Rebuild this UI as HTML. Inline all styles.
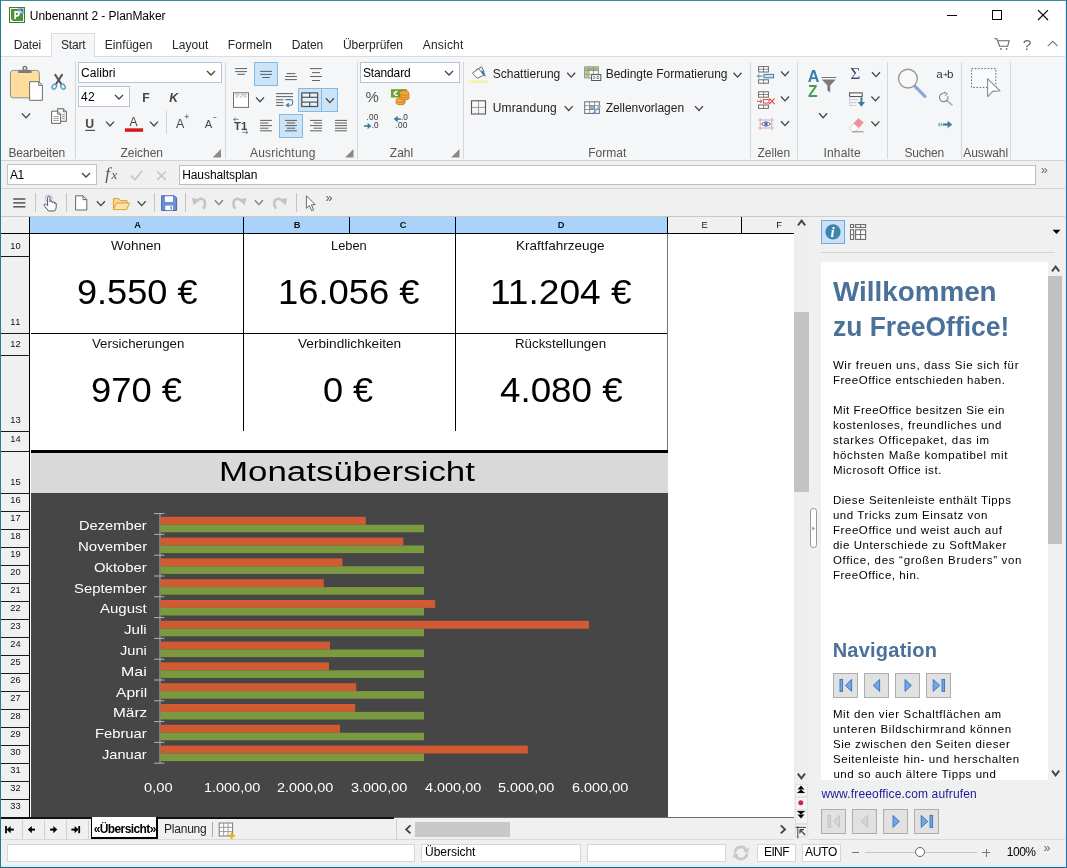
<!DOCTYPE html>
<html><head><meta charset="utf-8"><title>PlanMaker</title>
<style>
*{box-sizing:border-box;margin:0;padding:0}
html,body{will-change:transform;width:1067px;height:868px;overflow:hidden;background:#fff}
body{will-change:transform;font-family:"Liberation Sans",sans-serif;font-size:12px;color:#1e1e1e;position:relative}
.a{position:absolute}
.t{position:absolute;white-space:nowrap;line-height:1}
svg{position:absolute;overflow:visible}
</style></head><body>
<div class="a" style="left:1px;top:56px;width:1065px;height:105px;background:#f5f6f7;border-top:1px solid #dadbdc;border-bottom:1px solid #d2d3d5"></div>
<div class="a" style="left:51px;top:33px;width:44px;height:24px;background:#f5f6f7;border:1px solid #dadbdc;border-bottom:none"></div>
<div class="a" style="left:1px;top:161px;width:1065px;height:28px;background:#f0f0f0;border-bottom:1px solid #d4d4d4"></div>
<div class="a" style="left:1px;top:189px;width:1065px;height:28px;background:#f0f0f0"></div>
<div class="a" style="left:1px;top:216px;width:1065px;height:1px;background:#c8c8c8"></div>
<div class="a" style="left:30px;top:234px;width:765px;height:583px;background:#fff"></div>
<div class="a" style="left:808px;top:217px;width:258px;height:622px;background:#f0f0f0"></div>
<div class="a" style="left:1px;top:818px;width:807px;height:22px;background:#f0f0f0"></div>
<div class="a" style="left:1px;top:839px;width:1065px;height:28px;background:#f0f0f0;border-top:1px solid #d9d9d9"></div>
<div class="t" style="left:29.86px;top:10.14px;font-size:12px;letter-spacing:-0.047px;color:#000">Unbenannt 2 - PlanMaker</div>
<div class="t" style="left:13.86px;top:39.24px;font-size:12px;letter-spacing:-0.167px;color:#262626">Datei</div>
<div class="t" style="left:60.96px;top:39.24px;font-size:12px;letter-spacing:-0.193px;color:#262626">Start</div>
<div class="t" style="left:104.76px;top:39.24px;font-size:12px;letter-spacing:0.051px;color:#262626">Einfügen</div>
<div class="t" style="left:172.06px;top:39.24px;font-size:12px;letter-spacing:0.075px;color:#262626">Layout</div>
<div class="t" style="left:227.86px;top:39.24px;font-size:12px;letter-spacing:0.009px;color:#262626">Formeln</div>
<div class="t" style="left:291.86px;top:39.24px;font-size:12px;letter-spacing:-0.170px;color:#262626">Daten</div>
<div class="t" style="left:342.96px;top:39.24px;font-size:12px;color:#262626">Überprüfen</div>
<div class="t" style="left:422.76px;top:39.24px;font-size:12px;letter-spacing:0.203px;color:#262626">Ansicht</div>
<div class="t" style="left:8.46px;top:146.84px;font-size:12px;letter-spacing:-0.147px;color:#555">Bearbeiten</div>
<div class="t" style="left:120.46px;top:146.84px;font-size:12px;letter-spacing:-0.018px;color:#555">Zeichen</div>
<div class="t" style="left:249.96px;top:146.84px;font-size:12px;letter-spacing:0.200px;color:#555">Ausrichtung</div>
<div class="t" style="left:389.76px;top:146.84px;font-size:12px;letter-spacing:0.059px;color:#555">Zahl</div>
<div class="t" style="left:588.26px;top:146.84px;font-size:12px;letter-spacing:0.027px;color:#555">Format</div>
<div class="t" style="left:757.46px;top:146.84px;font-size:12px;letter-spacing:0.015px;color:#555">Zellen</div>
<div class="t" style="left:823.46px;top:146.84px;font-size:12px;letter-spacing:0.193px;color:#555">Inhalte</div>
<div class="t" style="left:904.46px;top:146.84px;font-size:12px;letter-spacing:-0.171px;color:#555">Suchen</div>
<div class="t" style="left:963.26px;top:146.84px;font-size:12px;letter-spacing:-0.083px;color:#555">Auswahl</div>
<div class="a" style="left:75px;top:62px;width:1px;height:97px;background:#d6d7d9"></div>
<div class="a" style="left:225px;top:62px;width:1px;height:97px;background:#d6d7d9"></div>
<div class="a" style="left:357px;top:62px;width:1px;height:97px;background:#d6d7d9"></div>
<div class="a" style="left:463px;top:62px;width:1px;height:97px;background:#d6d7d9"></div>
<div class="a" style="left:750px;top:62px;width:1px;height:97px;background:#d6d7d9"></div>
<div class="a" style="left:797px;top:62px;width:1px;height:97px;background:#d6d7d9"></div>
<div class="a" style="left:887px;top:62px;width:1px;height:97px;background:#d6d7d9"></div>
<div class="a" style="left:961px;top:62px;width:1px;height:97px;background:#d6d7d9"></div>
<div class="a" style="left:1010px;top:62px;width:1px;height:97px;background:#d6d7d9"></div>
<div class="t" style="left:492.66px;top:68.14px;font-size:12px;letter-spacing:0.024px;color:#222">Schattierung</div>
<div class="t" style="left:605.66px;top:68.14px;font-size:12px;letter-spacing:-0.009px;color:#222">Bedingte Formatierung</div>
<div class="t" style="left:492.66px;top:101.84px;font-size:12px;letter-spacing:0.175px;color:#222">Umrandung</div>
<div class="t" style="left:605.66px;top:101.84px;font-size:12px;letter-spacing:-0.024px;color:#222">Zellenvorlagen</div>
<div class="a" style="left:78px;top:62px;width:144px;height:21px;background:#fff;border:1px solid #b4c4d6"></div>
<div class="t" style="left:80.96px;top:66.64px;font-size:12px;letter-spacing:0.081px;color:#000">Calibri</div>
<svg style="left:206px;top:69.5px" width="10" height="6" viewBox="0 0 10 6"><path d="M1 1 L5 5 L9 1" fill="none" stroke="#444" stroke-width="1.3"/></svg>
<div class="a" style="left:78px;top:86px;width:52px;height:21px;background:#fff;border:1px solid #b4c4d6"></div>
<div class="t" style="left:80.96px;top:90.64px;font-size:12px;letter-spacing:0.360px;color:#000">42</div>
<svg style="left:114px;top:93.5px" width="10" height="6" viewBox="0 0 10 6"><path d="M1 1 L5 5 L9 1" fill="none" stroke="#444" stroke-width="1.3"/></svg>
<div class="a" style="left:360px;top:62px;width:100px;height:21px;background:#fff;border:1px solid #b4c4d6"></div>
<div class="t" style="left:362.96px;top:66.64px;font-size:12px;letter-spacing:-0.140px;color:#000">Standard</div>
<svg style="left:444px;top:69.5px" width="10" height="6" viewBox="0 0 10 6"><path d="M1 1 L5 5 L9 1" fill="none" stroke="#444" stroke-width="1.3"/></svg>
<div class="a" style="left:7px;top:164px;width:90px;height:21px;background:#fff;border:1px solid #b4c4d6"></div>
<div class="t" style="left:9.96px;top:168.64px;font-size:12px;letter-spacing:-0.554px;color:#000">A1</div>
<svg style="left:81px;top:171.5px" width="10" height="6" viewBox="0 0 10 6"><path d="M1 1 L5 5 L9 1" fill="none" stroke="#444" stroke-width="1.3"/></svg>
<div class="a" style="left:179px;top:165px;width:857px;height:20px;background:#fff;border:1px solid #b3bfcc"></div>
<div class="t" style="left:182.16px;top:169.44px;font-size:12px;letter-spacing:-0.068px;color:#000">Haushaltsplan</div>
<div class="a" style="left:1px;top:217px;width:29px;height:17px;background:#f0f0f0"></div>
<div class="a" style="left:30px;top:217px;width:637px;height:16px;background:#a9d3fa"></div>
<div class="a" style="left:667px;top:217px;width:128px;height:16px;background:#f0f0f0"></div>
<div class="a" style="left:29px;top:217px;width:1px;height:600px;background:#000"></div>
<div class="a" style="left:1px;top:233px;width:793px;height:1px;background:#000"></div>
<div class="a" style="left:243px;top:217px;width:1px;height:16px;background:#000"></div>
<div class="a" style="left:349px;top:217px;width:1px;height:16px;background:#000"></div>
<div class="a" style="left:455px;top:217px;width:1px;height:16px;background:#000"></div>
<div class="a" style="left:667px;top:217px;width:1px;height:16px;background:#000"></div>
<div class="a" style="left:741px;top:217px;width:1px;height:16px;background:#000"></div>
<div class="t" style="left:133.50px;top:221.03px;font-size:9.3px;font-weight:bold;color:#111;width:8px;text-align:center">A</div>
<div class="t" style="left:293.00px;top:221.03px;font-size:9.3px;font-weight:bold;color:#111;width:8px;text-align:center">B</div>
<div class="t" style="left:399.00px;top:221.03px;font-size:9.3px;font-weight:bold;color:#111;width:8px;text-align:center">C</div>
<div class="t" style="left:557.00px;top:221.03px;font-size:9.3px;font-weight:bold;color:#111;width:8px;text-align:center">D</div>
<div class="t" style="left:700.50px;top:221.03px;font-size:9.3px;color:#111;width:8px;text-align:center">E</div>
<div class="t" style="left:775.00px;top:221.03px;font-size:9.3px;color:#111;width:8px;text-align:center">F</div>
<div class="a" style="left:1px;top:234px;width:28px;height:583px;background:#f0f0f0"></div>
<div class="a" style="left:1px;top:256px;width:28px;height:1px;background:#1a1a1a"></div>
<div class="t" style="left:10.28px;top:241.73px;font-size:9.3px;letter-spacing:0.097px;color:#111">10</div>
<div class="a" style="left:1px;top:333px;width:28px;height:1px;background:#1a1a1a"></div>
<div class="t" style="left:10.28px;top:317.83px;font-size:9.3px;letter-spacing:0.440px;color:#111">11</div>
<div class="a" style="left:1px;top:355px;width:28px;height:1px;background:#1a1a1a"></div>
<div class="t" style="left:10.28px;top:339.83px;font-size:9.3px;letter-spacing:0.097px;color:#111">12</div>
<div class="a" style="left:1px;top:431px;width:28px;height:1px;background:#1a1a1a"></div>
<div class="t" style="left:10.28px;top:415.63px;font-size:9.3px;letter-spacing:0.097px;color:#111">13</div>
<div class="a" style="left:1px;top:451px;width:28px;height:1px;background:#1a1a1a"></div>
<div class="t" style="left:10.28px;top:434.73px;font-size:9.3px;letter-spacing:0.097px;color:#111">14</div>
<div class="a" style="left:1px;top:493px;width:28px;height:1px;background:#1a1a1a"></div>
<div class="t" style="left:10.28px;top:477.73px;font-size:9.3px;letter-spacing:0.097px;color:#111">15</div>
<div class="a" style="left:1px;top:511px;width:28px;height:1px;background:#1a1a1a"></div>
<div class="t" style="left:10.28px;top:495.73px;font-size:9.3px;letter-spacing:0.097px;color:#111">16</div>
<div class="a" style="left:1px;top:529px;width:28px;height:1px;background:#1a1a1a"></div>
<div class="t" style="left:10.28px;top:513.73px;font-size:9.3px;letter-spacing:0.097px;color:#111">17</div>
<div class="a" style="left:1px;top:547px;width:28px;height:1px;background:#1a1a1a"></div>
<div class="t" style="left:10.28px;top:531.73px;font-size:9.3px;letter-spacing:0.097px;color:#111">18</div>
<div class="a" style="left:1px;top:565px;width:28px;height:1px;background:#1a1a1a"></div>
<div class="t" style="left:10.28px;top:549.73px;font-size:9.3px;letter-spacing:0.097px;color:#111">19</div>
<div class="a" style="left:1px;top:583px;width:28px;height:1px;background:#1a1a1a"></div>
<div class="t" style="left:10.28px;top:567.73px;font-size:9.3px;letter-spacing:0.097px;color:#111">20</div>
<div class="a" style="left:1px;top:601px;width:28px;height:1px;background:#1a1a1a"></div>
<div class="t" style="left:10.28px;top:585.73px;font-size:9.3px;letter-spacing:0.097px;color:#111">21</div>
<div class="a" style="left:1px;top:619px;width:28px;height:1px;background:#1a1a1a"></div>
<div class="t" style="left:10.28px;top:603.73px;font-size:9.3px;letter-spacing:0.097px;color:#111">22</div>
<div class="a" style="left:1px;top:637px;width:28px;height:1px;background:#1a1a1a"></div>
<div class="t" style="left:10.28px;top:621.73px;font-size:9.3px;letter-spacing:0.097px;color:#111">23</div>
<div class="a" style="left:1px;top:655px;width:28px;height:1px;background:#1a1a1a"></div>
<div class="t" style="left:10.28px;top:639.73px;font-size:9.3px;letter-spacing:0.097px;color:#111">24</div>
<div class="a" style="left:1px;top:673px;width:28px;height:1px;background:#1a1a1a"></div>
<div class="t" style="left:10.28px;top:657.73px;font-size:9.3px;letter-spacing:0.097px;color:#111">25</div>
<div class="a" style="left:1px;top:691px;width:28px;height:1px;background:#1a1a1a"></div>
<div class="t" style="left:10.28px;top:675.73px;font-size:9.3px;letter-spacing:0.097px;color:#111">26</div>
<div class="a" style="left:1px;top:709px;width:28px;height:1px;background:#1a1a1a"></div>
<div class="t" style="left:10.28px;top:693.73px;font-size:9.3px;letter-spacing:0.097px;color:#111">27</div>
<div class="a" style="left:1px;top:727px;width:28px;height:1px;background:#1a1a1a"></div>
<div class="t" style="left:10.28px;top:711.73px;font-size:9.3px;letter-spacing:0.097px;color:#111">28</div>
<div class="a" style="left:1px;top:745px;width:28px;height:1px;background:#1a1a1a"></div>
<div class="t" style="left:10.28px;top:729.73px;font-size:9.3px;letter-spacing:0.097px;color:#111">29</div>
<div class="a" style="left:1px;top:763px;width:28px;height:1px;background:#1a1a1a"></div>
<div class="t" style="left:10.28px;top:747.73px;font-size:9.3px;letter-spacing:0.097px;color:#111">30</div>
<div class="a" style="left:1px;top:781px;width:28px;height:1px;background:#1a1a1a"></div>
<div class="t" style="left:10.28px;top:765.73px;font-size:9.3px;letter-spacing:0.097px;color:#111">31</div>
<div class="a" style="left:1px;top:799px;width:28px;height:1px;background:#1a1a1a"></div>
<div class="t" style="left:10.28px;top:783.73px;font-size:9.3px;letter-spacing:0.097px;color:#111">32</div>
<div class="a" style="left:1px;top:817px;width:28px;height:1px;background:#1a1a1a"></div>
<div class="t" style="left:10.28px;top:801.73px;font-size:9.3px;letter-spacing:0.097px;color:#111">33</div>
<div class="a" style="left:243px;top:234px;width:1px;height:197px;background:#000"></div>
<div class="a" style="left:455px;top:234px;width:1px;height:197px;background:#000"></div>
<div class="a" style="left:667px;top:234px;width:1px;height:260px;background:#747474"></div>
<div class="a" style="left:31px;top:333px;width:636px;height:1px;background:#000"></div>
<div class="t" style="left:111.45px;top:239.67px;font-size:12.2px;transform:scaleX(1.1087);transform-origin:0 0;color:#111">Wohnen</div>
<div class="t" style="left:331.25px;top:239.67px;font-size:12.2px;transform:scaleX(1.0533);transform-origin:0 0;color:#111">Leben</div>
<div class="t" style="left:516.45px;top:239.67px;font-size:12.2px;transform:scaleX(1.1081);transform-origin:0 0;color:#111">Kraftfahrzeuge</div>
<div class="t" style="left:91.75px;top:337.67px;font-size:12.2px;transform:scaleX(1.0897);transform-origin:0 0;color:#111">Versicherungen</div>
<div class="t" style="left:297.85px;top:337.67px;font-size:12.2px;transform:scaleX(1.1198);transform-origin:0 0;color:#111">Verbindlichkeiten</div>
<div class="t" style="left:515.45px;top:337.67px;font-size:12.2px;transform:scaleX(1.0930);transform-origin:0 0;color:#111">Rückstellungen</div>
<div class="t" style="left:76.85px;top:275.20px;font-size:34.5px;transform:scaleX(1.0469);transform-origin:0 0;color:#000">9.550 €</div>
<div class="t" style="left:278.45px;top:275.20px;font-size:34.5px;transform:scaleX(1.0544);transform-origin:0 0;color:#000">16.056 €</div>
<div class="t" style="left:490.45px;top:275.20px;font-size:34.5px;transform:scaleX(1.0749);transform-origin:0 0;color:#000">11.204 €</div>
<div class="t" style="left:90.95px;top:373.20px;font-size:34.5px;transform:scaleX(1.0528);transform-origin:0 0;color:#000">970 €</div>
<div class="t" style="left:322.95px;top:373.20px;font-size:34.5px;transform:scaleX(1.0466);transform-origin:0 0;color:#000">0 €</div>
<div class="t" style="left:500.45px;top:373.20px;font-size:34.5px;transform:scaleX(1.0651);transform-origin:0 0;color:#000">4.080 €</div>
<div class="a" style="left:31px;top:450px;width:637px;height:3px;background:#000"></div>
<div class="a" style="left:31px;top:453px;width:636.5px;height:40px;background:#d9d9d9"></div>
<div class="t" style="left:218.72px;top:456.96px;font-size:28.4px;transform:scaleX(1.2287);transform-origin:0 0;color:#000">Monatsübersicht</div>
<div class="a" style="left:31px;top:493px;width:636.5px;height:324px;background:#464646"></div>
<div class="t" style="left:79.39px;top:519.27px;font-size:13.5px;transform:scaleX(1.0872);transform-origin:0 0;color:#fff">Dezember</div>
<div class="t" style="left:77.89px;top:540.07px;font-size:13.5px;transform:scaleX(1.1113);transform-origin:0 0;color:#fff">November</div>
<div class="t" style="left:94.39px;top:560.87px;font-size:13.5px;transform:scaleX(1.0975);transform-origin:0 0;color:#fff">Oktober</div>
<div class="t" style="left:74.39px;top:581.67px;font-size:13.5px;transform:scaleX(1.1010);transform-origin:0 0;color:#fff">September</div>
<div class="t" style="left:100.39px;top:602.47px;font-size:13.5px;transform:scaleX(1.1114);transform-origin:0 0;color:#fff">August</div>
<div class="t" style="left:124.39px;top:623.27px;font-size:13.5px;transform:scaleX(1.1209);transform-origin:0 0;color:#fff">Juli</div>
<div class="t" style="left:120.39px;top:644.07px;font-size:13.5px;transform:scaleX(1.0787);transform-origin:0 0;color:#fff">Juni</div>
<div class="t" style="left:121.39px;top:664.87px;font-size:13.5px;transform:scaleX(1.1815);transform-origin:0 0;color:#fff">Mai</div>
<div class="t" style="left:115.89px;top:685.67px;font-size:13.5px;transform:scaleX(1.1554);transform-origin:0 0;color:#fff">April</div>
<div class="t" style="left:112.89px;top:706.47px;font-size:13.5px;transform:scaleX(1.1405);transform-origin:0 0;color:#fff">März</div>
<div class="t" style="left:95.39px;top:727.27px;font-size:13.5px;transform:scaleX(1.0938);transform-origin:0 0;color:#fff">Februar</div>
<div class="t" style="left:102.39px;top:748.07px;font-size:13.5px;transform:scaleX(1.0832);transform-origin:0 0;color:#fff">Januar</div>
<svg style="left:0px;top:0px" width="1067" height="868" viewBox="0 0 1067 868"><path d="M160 513.6 V763.2" stroke="#b0b0b0" stroke-width="1" fill="none"/><path d="M154 513.6 H164.4" stroke="#b0b0b0" stroke-width="1"/><path d="M154 534.4 H164.4" stroke="#b0b0b0" stroke-width="1"/><path d="M154 555.2 H164.4" stroke="#b0b0b0" stroke-width="1"/><path d="M154 576.0 H164.4" stroke="#b0b0b0" stroke-width="1"/><path d="M154 596.8 H164.4" stroke="#b0b0b0" stroke-width="1"/><path d="M154 617.6 H164.4" stroke="#b0b0b0" stroke-width="1"/><path d="M154 638.4 H164.4" stroke="#b0b0b0" stroke-width="1"/><path d="M154 659.2 H164.4" stroke="#b0b0b0" stroke-width="1"/><path d="M154 680.0 H164.4" stroke="#b0b0b0" stroke-width="1"/><path d="M154 700.8 H164.4" stroke="#b0b0b0" stroke-width="1"/><path d="M154 721.6 H164.4" stroke="#b0b0b0" stroke-width="1"/><path d="M154 742.4 H164.4" stroke="#b0b0b0" stroke-width="1"/><path d="M154 763.2 H164.4" stroke="#b0b0b0" stroke-width="1"/><rect x="160.5" y="516.80" width="205.3" height="7.9" fill="#d05b33"/><rect x="160.5" y="524.70" width="263.5" height="7.6" fill="#7b9a40"/><rect x="160.5" y="537.60" width="242.8" height="7.9" fill="#d05b33"/><rect x="160.5" y="545.50" width="263.5" height="7.6" fill="#7b9a40"/><rect x="160.5" y="558.40" width="182.0" height="7.9" fill="#d05b33"/><rect x="160.5" y="566.30" width="263.5" height="7.6" fill="#7b9a40"/><rect x="160.5" y="579.20" width="163.3" height="7.9" fill="#d05b33"/><rect x="160.5" y="587.10" width="263.5" height="7.6" fill="#7b9a40"/><rect x="160.5" y="600.00" width="274.7" height="7.9" fill="#d05b33"/><rect x="160.5" y="607.90" width="263.5" height="7.6" fill="#7b9a40"/><rect x="160.5" y="620.80" width="428.5" height="7.9" fill="#d05b33"/><rect x="160.5" y="628.70" width="263.5" height="7.6" fill="#7b9a40"/><rect x="160.5" y="641.60" width="169.5" height="7.9" fill="#d05b33"/><rect x="160.5" y="649.50" width="263.5" height="7.6" fill="#7b9a40"/><rect x="160.5" y="662.40" width="168.5" height="7.9" fill="#d05b33"/><rect x="160.5" y="670.30" width="263.5" height="7.6" fill="#7b9a40"/><rect x="160.5" y="683.20" width="195.7" height="7.9" fill="#d05b33"/><rect x="160.5" y="691.10" width="263.5" height="7.6" fill="#7b9a40"/><rect x="160.5" y="704.00" width="194.7" height="7.9" fill="#d05b33"/><rect x="160.5" y="711.90" width="263.5" height="7.6" fill="#7b9a40"/><rect x="160.5" y="724.80" width="179.5" height="7.9" fill="#d05b33"/><rect x="160.5" y="732.70" width="263.5" height="7.6" fill="#7b9a40"/><rect x="160.5" y="745.60" width="367.3" height="7.9" fill="#d05b33"/><rect x="160.5" y="753.50" width="263.5" height="7.6" fill="#7b9a40"/></svg>
<div class="t" style="left:143.65px;top:781.46px;font-size:13.4px;transform:scaleX(1.1014);transform-origin:0 0;color:#fff">0,00</div>
<div class="t" style="left:203.55px;top:781.46px;font-size:13.4px;transform:scaleX(1.0783);transform-origin:0 0;color:#fff">1.000,00</div>
<div class="t" style="left:277.20px;top:781.46px;font-size:13.4px;transform:scaleX(1.0783);transform-origin:0 0;color:#fff">2.000,00</div>
<div class="t" style="left:350.85px;top:781.46px;font-size:13.4px;transform:scaleX(1.0783);transform-origin:0 0;color:#fff">3.000,00</div>
<div class="t" style="left:424.50px;top:781.46px;font-size:13.4px;transform:scaleX(1.0783);transform-origin:0 0;color:#fff">4.000,00</div>
<div class="t" style="left:498.15px;top:781.46px;font-size:13.4px;transform:scaleX(1.0783);transform-origin:0 0;color:#fff">5.000,00</div>
<div class="t" style="left:571.80px;top:781.46px;font-size:13.4px;transform:scaleX(1.0783);transform-origin:0 0;color:#fff">6.000,00</div>
<div class="a" style="left:1px;top:817px;width:393px;height:2px;background:#111"></div>
<div class="a" style="left:394px;top:817px;width:401px;height:1px;background:#6a6a6a"></div>
<div class="a" style="left:794px;top:217px;width:15px;height:623px;background:#eeeeee"></div>
<div class="a" style="left:794.3px;top:311.5px;width:14.5px;height:180.3px;background:#c3c3c3"></div>
<div class="a" style="left:808px;top:216px;width:258px;height:1px;background:#d0d0d0"></div>
<div class="a" style="left:821px;top:220px;width:24px;height:24px;background:#c9e0f7;border:1px solid #6fa8dc"></div>
<div class="a" style="left:821px;top:252px;width:234px;height:1px;background:#d4d4d4"></div>
<div class="a" style="left:821px;top:262px;width:227px;height:518px;background:#fff"></div>
<div class="a" style="left:1048px;top:262px;width:14px;height:518px;background:#f0f0f0"></div>
<div class="a" style="left:1048px;top:276px;width:14px;height:268px;background:#c1c1c1"></div>
<div class="t" style="left:833.18px;top:279.34px;font-size:27px;transform:scaleX(1.0304);transform-origin:0 0;color:#4b7199;font-weight:bold">Willkommen</div>
<div class="t" style="left:832.78px;top:313.74px;font-size:27px;transform:scaleX(0.9788);transform-origin:0 0;color:#4b7199;font-weight:bold">zu FreeOffice!</div>
<div class="t" style="left:832.88px;top:359.77px;font-size:11.5px;letter-spacing:0.627px;color:#000">Wir freuen uns, dass Sie sich für</div>
<div class="t" style="left:832.88px;top:374.77px;font-size:11.5px;letter-spacing:0.537px;color:#000">FreeOffice entschieden haben.</div>
<div class="t" style="left:832.88px;top:404.77px;font-size:11.5px;letter-spacing:0.505px;color:#000">Mit FreeOffice besitzen Sie ein</div>
<div class="t" style="left:832.88px;top:419.77px;font-size:11.5px;letter-spacing:0.611px;color:#000">kostenloses, freundliches und</div>
<div class="t" style="left:832.88px;top:434.77px;font-size:11.5px;letter-spacing:0.683px;color:#000">starkes Officepaket, das im</div>
<div class="t" style="left:832.88px;top:449.77px;font-size:11.5px;letter-spacing:0.662px;color:#000">höchsten Maße kompatibel mit</div>
<div class="t" style="left:832.88px;top:464.77px;font-size:11.5px;letter-spacing:0.546px;color:#000">Microsoft Office ist.</div>
<div class="t" style="left:832.88px;top:494.77px;font-size:11.5px;letter-spacing:0.568px;color:#000">Diese Seitenleiste enthält Tipps</div>
<div class="t" style="left:832.88px;top:509.77px;font-size:11.5px;letter-spacing:0.579px;color:#000">und Tricks zum Einsatz von</div>
<div class="t" style="left:832.88px;top:524.77px;font-size:11.5px;letter-spacing:0.588px;color:#000">FreeOffice und weist auch auf</div>
<div class="t" style="left:832.88px;top:539.77px;font-size:11.5px;letter-spacing:0.575px;color:#000">die Unterschiede zu SoftMaker</div>
<div class="t" style="left:832.88px;top:554.77px;font-size:11.5px;letter-spacing:0.690px;color:#000">Office, des “großen Bruders” von</div>
<div class="t" style="left:832.88px;top:569.77px;font-size:11.5px;letter-spacing:0.552px;color:#000">FreeOffice, hin.</div>
<div class="t" style="left:832.88px;top:709.37px;font-size:11.5px;letter-spacing:0.623px;color:#000">Mit den vier Schaltflächen am</div>
<div class="t" style="left:832.88px;top:724.37px;font-size:11.5px;letter-spacing:0.681px;color:#000">unteren Bildschirmrand können</div>
<div class="t" style="left:832.88px;top:739.37px;font-size:11.5px;letter-spacing:0.590px;color:#000">Sie zwischen den Seiten dieser</div>
<div class="t" style="left:832.88px;top:754.37px;font-size:11.5px;letter-spacing:0.608px;color:#000">Seitenleiste hin- und herschalten</div>
<div class="a" style="left:821px;top:766px;width:227px;height:14px;overflow:hidden">
<div class="t" style="left:12.4px;top:3.4px;font-size:11.5px;letter-spacing:0.55px;color:#000">und so auch ältere Tipps und</div></div>
<div class="t" style="left:832.70px;top:640.17px;font-size:20px;letter-spacing:0.235px;color:#4b7199;font-weight:bold">Navigation</div>
<div class="t" style="left:821.46px;top:787.84px;font-size:12px;letter-spacing:0.159px;color:#1a1a96">www.freeoffice.com aufrufen</div>
<div class="a" style="left:91px;top:817px;width:67px;height:22px;background:#fff;border:1px solid #000;border-top:none;border-bottom-width:2px;border-right-width:2px"></div>
<div class="t" style="left:93.66px;top:823.14px;font-size:12px;letter-spacing:-0.602px;font-weight:bold;color:#000">«Übersicht»</div>
<div class="t" style="left:163.96px;top:823.14px;font-size:12px;letter-spacing:-0.210px;color:#222">Planung</div>
<div class="a" style="left:22px;top:820px;width:1px;height:19px;background:#d0d0d0"></div>
<div class="a" style="left:44px;top:820px;width:1px;height:19px;background:#d0d0d0"></div>
<div class="a" style="left:66px;top:820px;width:1px;height:19px;background:#d0d0d0"></div>
<div class="a" style="left:88px;top:820px;width:1px;height:19px;background:#d0d0d0"></div>
<div class="a" style="left:212px;top:822px;width:1px;height:15px;background:#aaa"></div>
<div class="a" style="left:396px;top:819px;width:1px;height:21px;background:#cfcfcf"></div>
<div class="a" style="left:415px;top:822px;width:95px;height:15px;background:#c8c8c8"></div>
<div class="a" style="left:7px;top:843.5px;width:408px;height:18px;background:#fff;border:1px solid #d6d6d6"></div>
<div class="a" style="left:421px;top:843.5px;width:159.5px;height:18px;background:#fff;border:1px solid #d6d6d6"></div>
<div class="a" style="left:586.5px;top:843.5px;width:139.5px;height:18px;background:#fff;border:1px solid #d6d6d6"></div>
<div class="a" style="left:756.5px;top:843.5px;width:39.0px;height:18px;background:#fff;border:1px solid #d6d6d6"></div>
<div class="a" style="left:801.5px;top:843.5px;width:39.0px;height:18px;background:#fff;border:1px solid #d6d6d6"></div>
<div class="t" style="left:425.06px;top:845.74px;font-size:12px;letter-spacing:-0.034px;color:#000">Übersicht</div>
<div class="t" style="left:764.06px;top:845.74px;font-size:12px;letter-spacing:-0.641px;color:#000">EINF</div>
<div class="t" style="left:805.06px;top:845.74px;font-size:12px;letter-spacing:-0.311px;color:#000">AUTO</div>
<div class="t" style="left:1006.76px;top:845.74px;font-size:12px;letter-spacing:-0.481px;color:#000">100%</div>
<div class="a" style="left:865px;top:852px;width:112px;height:1px;background:#c4c4c4"></div>
<div class="a" style="left:915px;top:847px;width:10px;height:10px;border-radius:50%;background:#fff;border:1px solid #666"></div>
<div class="a" style="left:852px;top:852px;width:7px;height:1px;background:#777"></div>
<div class="a" style="left:982px;top:852px;width:8px;height:1px;background:#777"></div>
<div class="a" style="left:985.5px;top:848.5px;width:1px;height:8px;background:#777"></div>
<div class="a" style="left:0px;top:0px;width:1067px;height:1px;background:#3a8ba4;z-index:50"></div>
<div class="a" style="left:0px;top:0px;width:1px;height:868px;background:#1f7d96;z-index:50"></div>
<div class="a" style="left:1065px;top:1px;width:1px;height:866px;background:#d6effc;z-index:50"></div>
<div class="a" style="left:1066px;top:0px;width:1px;height:868px;background:#2b6a9a;z-index:50"></div>
<div class="a" style="left:1px;top:865px;width:1065px;height:2px;background:#d6effc;z-index:50"></div>
<div class="a" style="left:0px;top:867px;width:1067px;height:1px;background:#2a6478;z-index:50"></div>
<div class="t" style="left:142.25px;top:91.97px;font-size:12.2px;letter-spacing:0.245px;font-weight:bold;color:#444">F</div>
<div class="t" style="left:169.35px;top:91.97px;font-size:12.2px;letter-spacing:3.000px;font-weight:bold;font-style:italic;color:#444">K</div>
<div class="t" style="left:85.25px;top:117.57px;font-size:12.2px;letter-spacing:0.785px;font-weight:bold;color:#444">U</div>
<div class="t" style="left:129.56px;top:116.04px;font-size:12px;letter-spacing:1.564px;color:#444">A</div>
<div class="a" style="left:166px;top:111px;width:1px;height:23px;background:#d0d1d3"></div>
<div class="t" style="left:175.94px;top:118.20px;font-size:12.4px;letter-spacing:1.750px;color:#444">A</div>
<div class="t" style="left:204.80px;top:119.22px;font-size:11.2px;letter-spacing:1.339px;color:#444">A</div>
<div class="a" style="left:254px;top:62px;width:24px;height:24px;background:#cce4f7;border:1px solid #84b9e4"></div>
<div class="a" style="left:279px;top:114px;width:24px;height:24px;background:#cce4f7;border:1px solid #84b9e4"></div>
<div class="a" style="left:298px;top:88px;width:40px;height:24px;background:#cce4f7;border:1px solid #84b9e4"></div>
<div class="a" style="left:321px;top:88px;width:1px;height:24px;background:#84b9e4"></div>
<div class="t" style="left:234.08px;top:119.98px;font-size:11.6px;transform:scaleX(0.9788);transform-origin:0 0;font-weight:bold;color:#444">T1</div>
<div class="t" style="left:365.62px;top:89.30px;font-size:15px;letter-spacing:-0.394px;color:#555">%</div>
<div class="t" style="left:366.43px;top:114.36px;font-size:8.2px;letter-spacing:0.249px;color:#333">.00</div>
<div class="t" style="left:371.63px;top:121.56px;font-size:8.2px;letter-spacing:0.047px;color:#333">.0</div>
<div class="t" style="left:401.03px;top:114.36px;font-size:8.2px;letter-spacing:-0.153px;color:#333">.0</div>
<div class="t" style="left:395.33px;top:121.56px;font-size:8.2px;letter-spacing:0.282px;color:#333">.00</div>
<div class="t" style="left:807.67px;top:67.99px;font-size:16.2px;letter-spacing:0.655px;font-weight:bold;color:#3d7ea8">A</div>
<div class="t" style="left:808.10px;top:83.59px;font-size:15.6px;letter-spacing:1.573px;font-weight:bold;color:#4d9a58">Z</div>
<div class="t" style="left:850.21px;top:64.99px;font-size:17.5px;letter-spacing:1.287px;color:#4a4a78;font-family:'Liberation Serif',serif">Σ</div>
<div class="t" style="left:936.28px;top:67.88px;font-size:11.6px;letter-spacing:0.991px;color:#333">a</div>
<div class="t" style="left:947.08px;top:67.88px;font-size:11.6px;letter-spacing:0.991px;color:#333">b</div>
<div class="t" style="left:105.14px;top:165.21px;font-size:17px;letter-spacing:1.557px;color:#555;font-family:'Liberation Serif',serif"><i>f</i><span style="font-size:13px"><i>x</i></span></div>
<div class="t" style="left:1040.80px;top:164.32px;font-size:12.5px;color:#666">»</div>
<div class="a" style="left:35px;top:193px;width:1px;height:19px;background:#c4c4c4"></div>
<div class="a" style="left:66px;top:193px;width:1px;height:19px;background:#c4c4c4"></div>
<div class="a" style="left:154px;top:193px;width:1px;height:19px;background:#c4c4c4"></div>
<div class="a" style="left:185px;top:193px;width:1px;height:19px;background:#c4c4c4"></div>
<div class="a" style="left:296px;top:193px;width:1px;height:19px;background:#c4c4c4"></div>
<div class="t" style="left:325.60px;top:192.32px;font-size:12.5px;color:#555">»</div>
<div class="t" style="left:1022.81px;top:36.66px;font-size:15.4px;letter-spacing:-0.676px;color:#666">?</div>
<div class="t" style="left:830.40px;top:224.70px;font-size:15px;color:#fff;font-family:'Liberation Serif',serif;z-index:5"><i><b>i</b></i></div>
<div class="a" style="left:795px;top:783.5px;width:13px;height:13px;background:#f3f3f3;border:1px solid #e2e2e2"></div>
<div class="a" style="left:795px;top:797px;width:13px;height:13px;background:#f3f3f3;border:1px solid #e2e2e2"></div>
<div class="a" style="left:795px;top:810.5px;width:13px;height:13px;background:#f3f3f3;border:1px solid #e2e2e2"></div>
<div class="a" style="left:795px;top:824px;width:13px;height:13px;background:#f3f3f3;border:1px solid #e2e2e2"></div>
<div class="a" style="left:833px;top:673px;width:25px;height:25px;background:#e1e1e1;border:1px solid #adadad"></div>
<div class="a" style="left:864px;top:673px;width:25px;height:25px;background:#e1e1e1;border:1px solid #adadad"></div>
<div class="a" style="left:895px;top:673px;width:25px;height:25px;background:#e1e1e1;border:1px solid #adadad"></div>
<div class="a" style="left:926px;top:673px;width:25px;height:25px;background:#e1e1e1;border:1px solid #adadad"></div>
<div class="a" style="left:821px;top:809px;width:25px;height:25px;background:#e1e1e1;border:1px solid #adadad"></div>
<div class="a" style="left:852px;top:809px;width:25px;height:25px;background:#e1e1e1;border:1px solid #adadad"></div>
<div class="a" style="left:883px;top:809px;width:25px;height:25px;background:#e1e1e1;border:1px solid #adadad"></div>
<div class="a" style="left:914px;top:809px;width:25px;height:25px;background:#e1e1e1;border:1px solid #adadad"></div>
<div class="t" style="left:1043.60px;top:841.82px;font-size:12.5px;color:#666">»</div>
<svg style="left:0px;top:0px" width="1067" height="868" viewBox="0 0 1067 868"><rect x="9.5" y="7.5" width="15" height="15" fill="#4b9238" stroke="#3d7d2e" stroke-width="1"/><rect x="10.5" y="8.5" width="13" height="13" fill="none" stroke="#eef7ea" stroke-width="1"/><rect x="18.2" y="8.2" width="5.6" height="5.6" fill="#7fa6d8"/><path d="M18.6 13.4 L23.4 8.6" stroke="#e9f1fb" stroke-width="1.2"/><rect x="20.6" y="9" width="2.2" height="2" fill="#3d5f9a"/><path d="M15.2 19 V11.8 H17 Q18.8 11.8 18.8 13.8 Q18.8 15.8 17 15.8 H15.2" fill="none" stroke="#fff" stroke-width="1.7"/><rect x="10.6" y="19.6" width="1.8" height="1.8" fill="#fff"/><path d="M947 15.5 H957" stroke="#000" stroke-width="1"/><rect x="992.5" y="10.5" width="9" height="9" fill="none" stroke="#000" stroke-width="1"/><path d="M1038 10.2 L1048 20 M1048 10.2 L1038 20" stroke="#000" stroke-width="1.1"/><path d="M994.2 38.8 H996.8 L999.6 46.3 H1007.6 L1009.2 40.8 H997.6" fill="none" stroke="#666" stroke-width="1.1"/><circle cx="1001" cy="48.9" r="0.9" fill="#666"/><circle cx="1006.6" cy="48.9" r="0.9" fill="#666"/><path d="M1047.8 46.2 L1052.7 41.3 L1057.6 46.2" fill="none" stroke="#777" stroke-width="1.2"/><rect x="10.4" y="70.4" width="29" height="27.4" rx="3" fill="#fddc9c" stroke="#8c8c8c" stroke-width="1"/><circle cx="24.9" cy="68.4" r="1.8" fill="#f5f6f7" stroke="#7b7b7b" stroke-width="1.5"/><path d="M18.2 72.9 V71.4 Q18.2 69.9 19.7 69.9 H30.1 Q31.6 69.9 31.6 71.4 V72.9 Z" fill="#7b7b7b"/><path d="M29.6 81.7 H38.8 L42.4 85.3 V100.3 H29.6 Z" fill="#fff" stroke="#6e6e6e" stroke-width="1"/><path d="M38.8 81.7 V85.3 H42.4" fill="none" stroke="#6e6e6e" stroke-width="1"/><path d="M22 113.5 L26 117.9 L30 113.5" fill="none" stroke="#444" stroke-width="1.3"/><path d="M55.3 74.9 L61.4 84.2 M62 74.9 L55.9 84.2" stroke="#555" stroke-width="2" stroke-linecap="round"/><ellipse cx="54.3" cy="86.6" rx="2" ry="2.7" transform="rotate(32 54.3 86.6)" fill="none" stroke="#5b9cc4" stroke-width="1.4"/><ellipse cx="63" cy="86.6" rx="2" ry="2.7" transform="rotate(-32 63 86.6)" fill="none" stroke="#5b9cc4" stroke-width="1.4"/><path d="M57.6 108.7 H63.4 L66.4 111.7 V121.3 H57.6 Z" fill="#f5f6f7" stroke="#666" stroke-width="1"/><path d="M63.4 108.7 V111.7 H66.4" fill="none" stroke="#666" stroke-width="0.9"/><path d="M51.6 111.2 H57.6 L60.6 114.2 V123.4 H51.6 Z" fill="#fff" stroke="#666" stroke-width="1"/><path d="M57.6 111.2 V114.2 H60.6" fill="none" stroke="#666" stroke-width="0.9"/><path d="M53.3 116.6 H58.9" stroke="#888" stroke-width="0.8" fill="none"/><path d="M53.3 118.6 H58.9" stroke="#888" stroke-width="0.8" fill="none"/><path d="M53.3 120.6 H58.9" stroke="#888" stroke-width="0.8" fill="none"/><path d="M62 114.6 H64.8" stroke="#888" stroke-width="0.8" fill="none"/><path d="M62 116.6 H64.8" stroke="#888" stroke-width="0.8" fill="none"/><path d="M62 118.6 H64.8" stroke="#888" stroke-width="0.8" fill="none"/><path d="M85.2 130.4 H95" stroke="#444" stroke-width="1.1" fill="none"/><path d="M106 121.6 L110 126.0 L114 121.6" fill="none" stroke="#444" stroke-width="1.3"/><rect x="124.9" y="128.3" width="18.2" height="3.5" fill="#d41a1f"/><path d="M150 121.6 L154 126.0 L158 121.6" fill="none" stroke="#444" stroke-width="1.3"/><path d="M184.6 116.6 H188.8 M186.7 114.5 V118.7" stroke="#3f7fae" stroke-width="0.9"/><path d="M213.2 117.5 H216.4" stroke="#3f7fae" stroke-width="0.9"/><path d="M221 149 V157.4 H212.6 Z" fill="#8a8a8a"/><path d="M353.5 149 V157.4 H345.1 Z" fill="#8a8a8a"/><path d="M459.5 149 V157.4 H451.1 Z" fill="#8a8a8a"/><path d="M235.1 68.6 H247" stroke="#636363" stroke-width="1.05" fill="none"/><path d="M235.1 71.6 H247" stroke="#636363" stroke-width="1.05" fill="none"/><path d="M237.29999999999998 74.3 H244.8" stroke="#636363" stroke-width="1.05" fill="none"/><path d="M260.1 71.4 H272" stroke="#636363" stroke-width="1.05" fill="none"/><path d="M260.1 74.4 H272" stroke="#636363" stroke-width="1.05" fill="none"/><path d="M262.3 77.5 H269.8" stroke="#636363" stroke-width="1.05" fill="none"/><path d="M286.6 73.6 H295.4" stroke="#636363" stroke-width="1.05" fill="none"/><path d="M285.1 76.5 H296.9" stroke="#636363" stroke-width="1.05" fill="none"/><path d="M285.1 79.6 H296.9" stroke="#636363" stroke-width="1.05" fill="none"/><path d="M310 68.6 H321.9" stroke="#636363" stroke-width="1.05" fill="none"/><path d="M312 72.6 H319.9" stroke="#636363" stroke-width="1.05" fill="none"/><path d="M310 76.5 H321.9" stroke="#636363" stroke-width="1.05" fill="none"/><path d="M312 80.5 H319.9" stroke="#636363" stroke-width="1.05" fill="none"/><rect x="233.5" y="92.8" width="15" height="14.6" fill="#fff" stroke="#707070" stroke-width="1"/><path d="M235.5 94.9 H239.5" stroke="#999" stroke-width="0.9" fill="none"/><path d="M241 94.9 H246.5" stroke="#999" stroke-width="0.9" fill="none"/><path d="M235.5 96.9 H238" stroke="#aaa" stroke-width="0.9" fill="none"/><path d="M239.5 96.9 H242" stroke="#aaa" stroke-width="0.9" fill="none"/><path d="M243.5 96.9 H246.5" stroke="#aaa" stroke-width="0.9" fill="none"/><path d="M256 97.39999999999999 L260 101.8 L264 97.39999999999999" fill="none" stroke="#444" stroke-width="1.3"/><path d="M276 93.6 H293" stroke="#636363" stroke-width="1.05" fill="none"/><path d="M276 96.6 H293" stroke="#636363" stroke-width="1.05" fill="none"/><path d="M276 99.8 H283.5" stroke="#636363" stroke-width="1.05" fill="none"/><path d="M276 102.6 H283.5" stroke="#636363" stroke-width="1.05" fill="none"/><path d="M276 105.4 H283.5" stroke="#636363" stroke-width="1.05" fill="none"/><path d="M285.5 99.6 H291 Q292.6 99.6 292.6 101.2 V103.6 Q292.6 105.2 291 105.2 H287" fill="none" stroke="#4f7f9e" stroke-width="1.1"/><path d="M285.4 105.2 L288.8 102.6 V107.8 Z" fill="#4f7f9e"/><rect x="301.8" y="92.9" width="15.8" height="13.6" fill="#e9f3fb" stroke="#555" stroke-width="1.3"/><path d="M301.8 97.3 H317.6" stroke="#555" stroke-width="1.2" fill="none"/><path d="M301.8 102.1 H317.6" stroke="#555" stroke-width="1.2" fill="none"/><path d="M309.7 92.9 V97.3 M309.7 102.1 V106.5" stroke="#555" stroke-width="1.2"/><path d="M325.9 98.2 L329.9 102.60000000000001 L333.9 98.2" fill="none" stroke="#444" stroke-width="1.3"/><path d="M233.6 119.4 H238.6 M235.6 117.6 L233.6 119.4 L235.6 121.2" fill="none" stroke="#4f7f9e" stroke-width="0.9"/><path d="M242.4 132.3 H247.8 M245.8 130.5 L247.8 132.3 L245.8 134.1" fill="none" stroke="#4f7f9e" stroke-width="0.9"/><path d="M260.1 120.4 H271.9" stroke="#636363" stroke-width="1.05" fill="none"/><path d="M260.1 123 H268.5" stroke="#636363" stroke-width="1.05" fill="none"/><path d="M260.1 125.6 H271.9" stroke="#636363" stroke-width="1.05" fill="none"/><path d="M260.1 128.2 H268.5" stroke="#636363" stroke-width="1.05" fill="none"/><path d="M260.1 130.8 H271.9" stroke="#636363" stroke-width="1.05" fill="none"/><path d="M285.1 120.4 H296.9" stroke="#636363" stroke-width="1.05" fill="none"/><path d="M286.90000000000003 123 H295.09999999999997" stroke="#636363" stroke-width="1.05" fill="none"/><path d="M285.1 125.6 H296.9" stroke="#636363" stroke-width="1.05" fill="none"/><path d="M286.90000000000003 128.2 H295.09999999999997" stroke="#636363" stroke-width="1.05" fill="none"/><path d="M285.1 130.8 H296.9" stroke="#636363" stroke-width="1.05" fill="none"/><path d="M310 120.4 H321.9" stroke="#636363" stroke-width="1.05" fill="none"/><path d="M313.6 123 H321.9" stroke="#636363" stroke-width="1.05" fill="none"/><path d="M310 125.6 H321.9" stroke="#636363" stroke-width="1.05" fill="none"/><path d="M313.6 128.2 H321.9" stroke="#636363" stroke-width="1.05" fill="none"/><path d="M310 130.8 H321.9" stroke="#636363" stroke-width="1.05" fill="none"/><path d="M335 120.4 H347" stroke="#636363" stroke-width="1.05" fill="none"/><path d="M335 123 H347" stroke="#636363" stroke-width="1.05" fill="none"/><path d="M335 125.6 H347" stroke="#636363" stroke-width="1.05" fill="none"/><path d="M335 128.2 H347" stroke="#636363" stroke-width="1.05" fill="none"/><path d="M335 130.8 H347" stroke="#636363" stroke-width="1.05" fill="none"/><rect x="391" y="89.2" width="15.8" height="8.3" fill="#6b9e2f"/><path d="M397.9 91.2 Q394.3 90.4 394.3 93.4 Q394.3 96.4 397.9 95.6 M393.4 92.7 H396.6 M393.4 94.2 H396.6" fill="none" stroke="#fff" stroke-width="1"/><ellipse cx="400.6" cy="102.4" rx="4.6" ry="2.3" fill="#f3a83c" stroke="#c97c1d" stroke-width="0.9"/><ellipse cx="400.6" cy="100.2" rx="4.6" ry="2.3" fill="#f3a83c" stroke="#c97c1d" stroke-width="0.9"/><ellipse cx="404.6" cy="97.6" rx="4.6" ry="2.3" fill="#f3a83c" stroke="#c97c1d" stroke-width="0.9"/><ellipse cx="404.6" cy="95.4" rx="4.6" ry="2.3" fill="#f3a83c" stroke="#c97c1d" stroke-width="0.9"/><ellipse cx="404.2" cy="93.0" rx="4.6" ry="2.3" fill="#f3a83c" stroke="#c97c1d" stroke-width="0.9"/><path d="M364 126 H368.6" stroke="#3f7a99" stroke-width="1.6"/><path d="M371.4 126 L367.6 122.8 V129.2 Z" fill="#3f7a99"/><path d="M400.8 119 H396.4" stroke="#3f7a99" stroke-width="1.6"/><path d="M393.8 119 L397.6 115.8 V122.2 Z" fill="#3f7a99"/><path d="M476.2 69.8 L481.6 66.9 L484.2 71.8" fill="none" stroke="#6a6a6a" stroke-width="1"/><path d="M472.4 73.2 L478.6 68.6 L483.8 75.2 L477.4 78.2 Z" fill="#fff" stroke="#6a6a6a" stroke-width="1"/><path d="M481.2 70.2 Q485.6 71 485.4 77.6 Q483.6 73.6 481.6 73 Z" fill="#3a78b5"/><rect x="468.9" y="80.5" width="19" height="2.2" fill="#f6f0a0"/><path d="M567.2 72.7 L571.2 77.10000000000001 L575.2 72.7" fill="none" stroke="#444" stroke-width="1.3"/><rect x="584.7" y="66.9" width="13.6" height="11" fill="#fff" stroke="#7a7a7a" stroke-width="0.9"/><rect x="585.2" y="67.4" width="12.6" height="3.2" fill="#9bb86a"/><rect x="585.2" y="70.6" width="3.6" height="6.8" fill="#b7cf8c"/><path d="M589 66.9 V77.9 M593.5 66.9 V77.9 M584.7 70.6 H598.3 M584.7 74.3 H598.3" stroke="#8a8a8a" stroke-width="0.8" fill="none"/><rect x="591.6" y="74.6" width="9.2" height="5.9" fill="#fff" stroke="#555" stroke-width="1"/><path d="M593.2 76.2 L595.2 77.5 L593.2 78.8 M596.4 76.7 H599.2 M596.4 78.4 H599.2" fill="none" stroke="#555" stroke-width="0.8"/><path d="M733.5 72.7 L737.5 77.10000000000001 L741.5 72.7" fill="none" stroke="#444" stroke-width="1.3"/><path d="M478.5 100.8 V114 M471.5 107.4 H485.5" stroke="#9a9a9a" stroke-width="1"/><rect x="471.5" y="100.8" width="14" height="13.2" fill="none" stroke="#5a5a5a" stroke-width="1.1"/><path d="M564.7 106.1 L568.7 110.5 L572.7 106.1" fill="none" stroke="#444" stroke-width="1.3"/><rect x="584.7" y="101.8" width="14.6" height="11.6" fill="#fff" stroke="#6a6a6a" stroke-width="1"/><rect x="589.6" y="105.6" width="5" height="3.9" fill="#7fb2d6"/><path d="M589.6 101.8 V113.4 M594.6 101.8 V113.4 M584.7 105.6 H599.3 M584.7 109.5 H599.3" stroke="#7a7a7a" stroke-width="0.8" fill="none"/><path d="M599.8 106.2 L594.6 111.4" stroke="#9aa9c4" stroke-width="2" stroke-linecap="round"/><path d="M594.8 111 Q592.6 111.6 592 114.4 Q594.8 114.2 595.8 112.2 Z" fill="#5b8fd0"/><path d="M695 106.1 L699 110.5 L703 106.1" fill="none" stroke="#444" stroke-width="1.3"/><rect x="758.6" y="66.6" width="9.8" height="5.4" fill="#fff" stroke="#6a6a6a" stroke-width="1"/><path d="M763.5 66.6 V72.0 M758.6 69.3 H768.4" stroke="#6a6a6a" stroke-width="0.8"/><rect x="758.6" y="79.8" width="9.8" height="3.4" fill="#fff" stroke="#6a6a6a" stroke-width="1"/><path d="M763.5 79.8 V83.19999999999999" stroke="#6a6a6a" stroke-width="0.8"/><rect x="764" y="74.39999999999999" width="9.6" height="3.4" fill="#cfe6f5" stroke="#3f7fa6" stroke-width="1"/><path d="M757.4 76.1 H762.6 M759.4 74.3 L757.4 76.1 L759.4 77.89999999999999" fill="none" stroke="#3f7fa6" stroke-width="1"/><rect x="758.6" y="91.8" width="9.8" height="5.4" fill="#fff" stroke="#6a6a6a" stroke-width="1"/><path d="M763.5 91.8 V97.2 M758.6 94.5 H768.4" stroke="#6a6a6a" stroke-width="0.8"/><rect x="758.6" y="105.0" width="9.8" height="3.4" fill="#fff" stroke="#6a6a6a" stroke-width="1"/><path d="M763.5 105.0 V108.4" stroke="#6a6a6a" stroke-width="0.8"/><rect x="763.4" y="99.6" width="5.6" height="3.4" fill="#fff" stroke="#d84848" stroke-width="1"/><path d="M757 101.3 H762 M760.2 99.7 L762 101.3 L760.2 102.89999999999999" fill="none" stroke="#d84848" stroke-width="1"/><path d="M769.4 98.39999999999999 L774.6 104.2 M774.6 98.39999999999999 L769.4 104.2" stroke="#d84848" stroke-width="1.1"/><path d="M781 71.39999999999999 L785 75.8 L789 71.39999999999999" fill="none" stroke="#444" stroke-width="1.3"/><path d="M781 96.5 L785 100.9 L789 96.5" fill="none" stroke="#444" stroke-width="1.3"/><path d="M781 121.2 L785 125.60000000000001 L789 121.2" fill="none" stroke="#444" stroke-width="1.3"/><path d="M758 120 H774 M758 128 H774 M760.2 117.8 V130.2 M771.8 117.8 V130.2" stroke="#e0a6b0" stroke-width="1" fill="none"/><path d="M761.4 124 Q766 119.8 770.6 124 Q766 128.2 761.4 124 Z" fill="#fff" stroke="#4a64a8" stroke-width="1"/><circle cx="766" cy="124" r="1.7" fill="#4a64a8"/><path d="M821.4 77.5 H836.2" stroke="#777" stroke-width="1"/><path d="M821.8 79.4 H835.8 L830.2 85.6 V92.6 L827.4 90.6 V85.6 Z" fill="#7a7a7a"/><path d="M819.1 113.3 L823.1 117.7 L827.1 113.3" fill="none" stroke="#444" stroke-width="1.3"/><path d="M872 72.2 L876 76.60000000000001 L880 72.2" fill="none" stroke="#444" stroke-width="1.3"/><path d="M871.4 96.5 L875.4 100.9 L879.4 96.5" fill="none" stroke="#444" stroke-width="1.3"/><path d="M871.4 121.39999999999999 L875.4 125.8 L879.4 121.39999999999999" fill="none" stroke="#444" stroke-width="1.3"/><rect x="849.6" y="92.9" width="12.6" height="3.6" fill="#fff" stroke="#555" stroke-width="1.1"/><path d="M849.6 99.6 H858 M849.6 102.6 H856.6 M849.6 105.4 H856" stroke="#c4ccd4" stroke-width="1"/><path d="M849.6 96.5 V105.6 M862.2 96.5 V99" stroke="#c4ccd4" stroke-width="0.8"/><path d="M861.4 97.4 V103" stroke="#3f7a99" stroke-width="2"/><path d="M857.8 102 H865 L861.4 106.8 Z" fill="#3f7a99"/><path d="M849.4 128 L858.4 118.4 L863.4 122.6 L855.2 131.6 H852.6 Z" fill="#fff" stroke="#c9c9c9" stroke-width="0.9"/><path d="M853.6 123.6 L858.4 118.4 L863.4 122.6 L858.6 127.9 Z" fill="#f38e9b"/><path d="M852 131.8 H863.6" stroke="#8a8a8a" stroke-width="1"/><path d="M914.6 86 L925 96.4" stroke="#8da6de" stroke-width="3.2" stroke-linecap="round"/><circle cx="907.9" cy="78.6" r="9.4" fill="#f7f8f9" stroke="#9a9a9a" stroke-width="1.4"/><path d="M943.4 74.6 H946.4" stroke="#3f7a99" stroke-width="1"/><path d="M947.4 74.6 L945.2 72.8 V76.4 Z" fill="#3f7a99"/><path d="M946.6 100.4 L952 104.8" stroke="#9ab0d0" stroke-width="1.6" stroke-linecap="round"/><path d="M947.9 96.2 A4.3 4.3 0 1 1 945.2 93.3" fill="none" stroke="#8a8a8a" stroke-width="1.1"/><path d="M944.2 92 L947.6 93.6 L945 96" fill="none" stroke="#7a8aa8" stroke-width="1"/><path d="M939 122.8 V126.2 M941.2 122.8 V126.2" stroke="#3f7a99" stroke-width="0.9"/><path d="M942.8 124.5 H948" stroke="#3f7a99" stroke-width="2.2"/><path d="M952.2 124.5 L947.6 120.7 V128.3 Z" fill="#3f7a99"/><rect x="971.6" y="68.6" width="24.2" height="18.8" fill="#f9fafb" stroke="#456f8f" stroke-width="1" stroke-dasharray="1.6 1.6"/><path d="M987.6 78.6 V96.6 L992.6 91.4 L1000 90.8 Z" fill="#fff" stroke="#8a8a8a" stroke-width="1.1" stroke-linejoin="round"/><path d="M131 175.6 L135 179.6 L142.2 171" fill="none" stroke="#c3c3c3" stroke-width="1.5"/><path d="M157.2 171.4 L165.8 180 M165.8 171.4 L157.2 180" fill="none" stroke="#c3c3c3" stroke-width="1.4"/><path d="M13.2 199 H25.4" stroke="#555" stroke-width="1.5" fill="none"/><path d="M13.2 202.9 H25.4" stroke="#555" stroke-width="1.5" fill="none"/><path d="M13.2 206.8 H25.4" stroke="#555" stroke-width="1.5" fill="none"/><circle cx="48.8" cy="198.4" r="3.6" fill="#dbe4fa" stroke="#a9bcf0" stroke-width="0.8"/><path d="M47.6 205.6 V197.6 Q47.6 196.4 48.8 196.4 Q50 196.4 50 197.6 V202 Q50 201 51.2 201 Q52.4 201 52.4 202.2 V202.8 Q52.4 201.8 53.5 201.8 Q54.6 201.8 54.6 203 V203.6 Q54.6 202.8 55.4 202.8 Q56.2 202.8 56.2 204 V207 Q56.2 209.4 54.6 211 H48.6 L44.4 205.8 Q43.6 204.6 44.6 204 Q45.6 203.6 46.4 204.6 Z" fill="#fff" stroke="#555" stroke-width="1"/><path d="M75.6 195.8 H83 L86.8 199.6 V210 H75.6 Z" fill="#fff" stroke="#666" stroke-width="1"/><path d="M83 195.8 V199.6 H86.8" fill="none" stroke="#666" stroke-width="1"/><path d="M96.9 201.20000000000002 L100.9 205.6 L104.9 201.20000000000002" fill="none" stroke="#444" stroke-width="1.3"/><path d="M137.7 201.20000000000002 L141.7 205.6 L145.7 201.20000000000002" fill="none" stroke="#444" stroke-width="1.3"/><path d="M113.4 209.4 V198.6 H118.6 L120.4 200.6 H127 V203" fill="#fbd68a" stroke="#d9a244" stroke-width="1"/><path d="M113.4 209.6 L116.4 203 H129.6 L126.6 209.6 Z" fill="#fde2a6" stroke="#d9a244" stroke-width="1"/><path d="M161.6 195.8 H174.4 L176.6 198 V210.5 H161.6 Z" fill="#6c90d4" stroke="#4a68a8" stroke-width="1"/><rect x="165" y="196.3" width="8" height="5.6" fill="#fff"/><rect x="165.4" y="205.6" width="7.6" height="4.6" fill="#fff"/><rect x="170.4" y="206.4" width="1.6" height="3" fill="#6c90d4"/><g><path d="M195.9 202 Q198.4 198.6 201.3 198.8 Q205.1 199.4 205.0 203.6 Q204.9 206.4 203.1 208.8" fill="none" stroke="#c4c4c4" stroke-width="2.5"/><path d="M191.9 197.8 L199.3 199.4 L193.70000000000002 205.6 Z" fill="#c4c4c4"/></g><g transform="translate(478.59999999999997 0) scale(-1 1)"><path d="M236.1 202 Q238.6 198.6 241.5 198.8 Q245.29999999999998 199.4 245.2 203.6 Q245.1 206.4 243.29999999999998 208.8" fill="none" stroke="#c4c4c4" stroke-width="2.5"/><path d="M232.1 197.8 L239.5 199.4 L233.9 205.6 Z" fill="#c4c4c4"/></g><g transform="translate(560.1999999999999 0) scale(-1 1)"><path d="M276.9 202 Q279.4 198.6 282.29999999999995 198.8 Q286.09999999999997 199.4 286.0 203.6 Q285.9 206.4 284.09999999999997 208.8" fill="none" stroke="#c4c4c4" stroke-width="2.5"/><path d="M272.9 197.8 L280.29999999999995 199.4 L274.7 205.6 Z" fill="#c4c4c4"/></g><path d="M214.9 200.20000000000002 L218.9 204.6 L222.9 200.20000000000002" fill="none" stroke="#777" stroke-width="1.3"/><path d="M254.89999999999998 200.20000000000002 L258.9 204.6 L262.9 200.20000000000002" fill="none" stroke="#777" stroke-width="1.3"/><path d="M306.4 195.8 V208.2 L309.4 205.6 L311.6 210.6 L313.6 209.8 L311.4 204.9 L315.2 204.6 Z" fill="#fff" stroke="#666" stroke-width="1" stroke-linejoin="round"/><circle cx="833" cy="231.9" r="7.6" fill="#3f84ad"/><rect x="850.5" y="224.6" width="3.10" height="2.80" fill="#fff" stroke="#6a6a6a" stroke-width="1.1"/><rect x="855.6" y="224.6" width="10.00" height="2.80" fill="#fff" stroke="#6a6a6a" stroke-width="1.1"/><path d="M860.6 224.6 V227.4" stroke="#6a6a6a" stroke-width="1"/><rect x="850.5" y="229.8" width="3.10" height="9.60" fill="#fff" stroke="#6a6a6a" stroke-width="1.1"/><path d="M850.5 234.6 H853.6" stroke="#6a6a6a" stroke-width="1"/><rect x="855.6" y="229.8" width="10.00" height="9.60" fill="#fff" stroke="#6a6a6a" stroke-width="1.1"/><path d="M860.6 229.8 V239.4 M855.6 234.6 H865.6" stroke="#6a6a6a" stroke-width="1"/><path d="M1052.5 229.8 H1060.5 L1056.5 234 Z" fill="#000"/><path d="M798.0 225.4 L801.6 220.6 L805.2 225.4" fill="none" stroke="#444" stroke-width="1.9"/><path d="M797.8 773.6 L801.4 778.4 L805.0 773.6" fill="none" stroke="#444" stroke-width="1.9"/><path d="M1052.0 271.4 L1055.6 266.6 L1059.1999999999998 271.4" fill="none" stroke="#444" stroke-width="1.9"/><path d="M1052.0 770.6 L1055.6 775.4 L1059.1999999999998 770.6" fill="none" stroke="#444" stroke-width="1.9"/><path d="M410.4 825.4 L406.2 829.4 L410.4 833.4" fill="none" stroke="#444" stroke-width="1.9"/><path d="M780.8 825.4 L785 829.4 L780.8 833.4" fill="none" stroke="#444" stroke-width="1.9"/><rect x="810.5" y="508.5" width="6" height="39" rx="2.6" fill="#fff" stroke="#9a9a9a" stroke-width="1"/><path d="M812.2 526.4 L815 528.5 L812.2 530.6 Z" fill="#999"/><path d="M797.6 789.4 L801 785.6 L804.4 789.4 Z M797.6 792.6 L801 789.6 L804.4 792.6 Z" fill="#000"/><path d="M797.4 792.6 H804.6" stroke="#000" stroke-width="1"/><circle cx="800.8" cy="802.8" r="2.5" fill="#c2266a"/><path d="M797.6 814.6 L801 818.4 L804.4 814.6 Z M797.6 811.4 L801 814.4 L804.4 811.4 Z" fill="#000"/><path d="M797.4 811.4 H804.6" stroke="#000" stroke-width="1"/><path d="M795.6 827.4 H806 M797.8 826.4 V838.4" stroke="#444" stroke-width="1" fill="none"/><path d="M800 829.6 H804 M800 829.6 V833.6 M800 829.6 L805.2 835" stroke="#444" stroke-width="1.3" fill="none"/><rect x="840" y="679.4" width="2.6" height="12" fill="#6fa7e8" stroke="#3d72b4" stroke-width="0.9"/><path d="M845.4 685.4 L851.6 679.4 V691.4 Z" fill="#6fa7e8" stroke="#3d72b4" stroke-width="0.9"/><path d="M873.2 685.4 L879.6 679.4 V691.4 Z" fill="#6fa7e8" stroke="#3d72b4" stroke-width="0.9"/><path d="M911.4 685.4 L905 679.4 V691.4 Z" fill="#6fa7e8" stroke="#3d72b4" stroke-width="0.9"/><path d="M939.8 685.4 L933.2 679.4 V691.4 Z" fill="#6fa7e8" stroke="#3d72b4" stroke-width="0.9"/><rect x="942" y="679.4" width="2.6" height="12" fill="#6fa7e8" stroke="#3d72b4" stroke-width="0.9"/><rect x="828" y="815.4" width="2.6" height="12" fill="#d4d4d4" stroke="#c0c0c0" stroke-width="0.9"/><path d="M833.4 821.4 L839.6 815.4 V827.4 Z" fill="#d4d4d4" stroke="#c0c0c0" stroke-width="0.9"/><path d="M861.2 821.4 L867.6 815.4 V827.4 Z" fill="#d4d4d4" stroke="#c0c0c0" stroke-width="0.9"/><path d="M899.4 821.4 L893 815.4 V827.4 Z" fill="#6fa7e8" stroke="#3d72b4" stroke-width="0.9"/><path d="M927.8 821.4 L921.2 815.4 V827.4 Z" fill="#6fa7e8" stroke="#3d72b4" stroke-width="0.9"/><rect x="930" y="815.4" width="2.6" height="12" fill="#6fa7e8" stroke="#3d72b4" stroke-width="0.9"/><path d="M6 826 V833.2" stroke="#000" stroke-width="1.8"/><path d="M13.8 829.6 H9.4" stroke="#000" stroke-width="2"/><path d="M6.6000000000000005 829.6 L10.6 826.0 V833.2 Z" fill="#000"/><path d="M35.0 829.6 H30.6" stroke="#000" stroke-width="2"/><path d="M27.8 829.6 L31.8 826.0 V833.2 Z" fill="#000"/><path d="M50.1 829.6 H54.5" stroke="#000" stroke-width="2"/><path d="M57.3 829.6 L53.3 826.0 V833.2 Z" fill="#000"/><path d="M71.39999999999999 829.6 H75.8" stroke="#000" stroke-width="2"/><path d="M78.6 829.6 L74.6 826.0 V833.2 Z" fill="#000"/><path d="M79.2 826 V833.2" stroke="#000" stroke-width="1.8"/><rect x="219.2" y="823" width="13.4" height="13" fill="#fff" stroke="#7a7a7a" stroke-width="1"/><path d="M223.7 823 V836 M228.1 823 V836 M219.2 827.3 H232.6 M219.2 831.6 H232.6" stroke="#8e8e8e" stroke-width="0.9" fill="none"/><path d="M231.6 832.4 V839 M228.3 835.7 H234.9" stroke="#eab308" stroke-width="2"/><path d="M735 852.5 A6 6 0 0 1 746.2 850" fill="none" stroke="#c9c9c9" stroke-width="2.8"/><path d="M747.9 853 L749.4 847.6 L742.8 851.4 Z" fill="#c9c9c9"/><path d="M747 853.5 A6 6 0 0 1 735.8 856" fill="none" stroke="#c9c9c9" stroke-width="2.8"/><path d="M734.1 853 L732.6 858.4 L739.2 854.6 Z" fill="#c9c9c9"/></svg>
</body></html>
